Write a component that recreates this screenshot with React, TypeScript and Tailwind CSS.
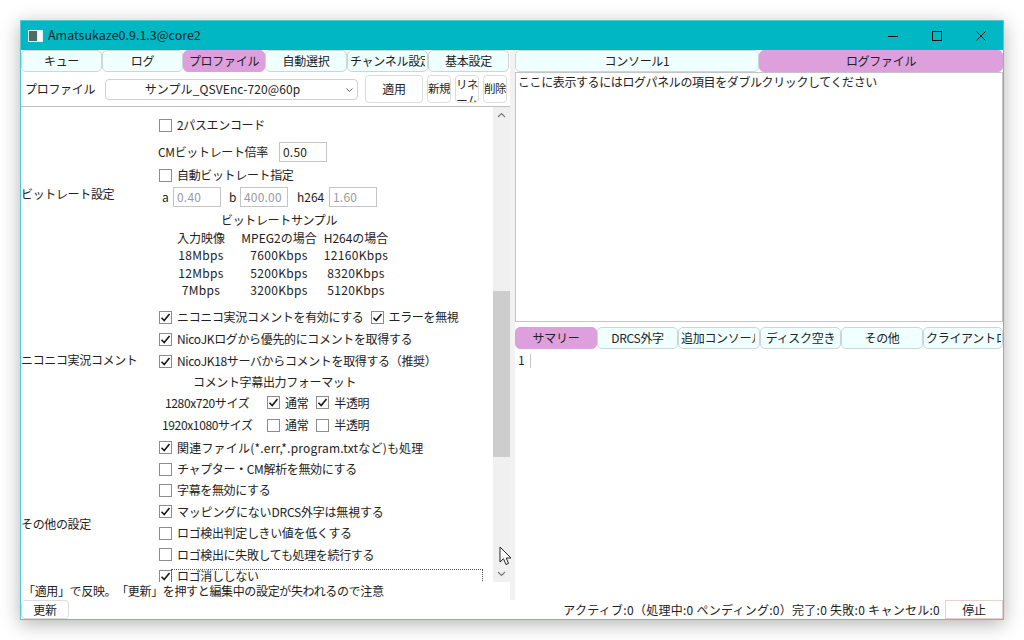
import type { ReactNode } from "react";

const font = "font-['Noto_Sans_CJK_JP','Noto_Sans',sans-serif]";

function Tab({ label, active, clip, w }: { label: string; active?: boolean; clip?: string; w: string }) {
  return (
    <div
      className={`flex h-[22px] shrink-0 items-center overflow-hidden whitespace-nowrap rounded-[5px] border text-[12px] tracking-[-0.3px] ${w} ${
        clip ? `justify-start pl-[2px] ${clip}` : "justify-center"
      } ${active ? "border-[#dda0dd] bg-[#dda0dd]" : "border-[#ccd6d6] bg-[#f0ffff]"}`}
    >
      {clip ? <span className="block min-w-0 overflow-hidden">{label}</span> : label}
    </div>
  );
}

function Check({ on, label, className = "" }: { on?: boolean; label?: string; className?: string }) {
  return (
    <span className={`flex items-center whitespace-nowrap ${className}`}>
      <span className="flex h-[13px] w-[13px] shrink-0 items-center justify-center border border-[#8c8c8c] bg-white">
        {on && (
          <svg width="11" height="11" viewBox="0 0 11 11" fill="none">
            <path d="M1.5 5.8 L4.2 8.6 L9.5 2" stroke="#1a1a1a" strokeWidth="1.6" />
          </svg>
        )}
      </span>
      {label && <span className="ml-[5px]">{label}</span>}
    </span>
  );
}

function NumBox({ value, disabled, w }: { value: string; disabled?: boolean; w: string }) {
  return (
    <span
      className={`flex h-[20px] items-center border border-[#c4c4c4] pl-[3px] text-[12px] tracking-[0.2px] ${w} ${
        disabled ? "text-[#9a9a9a]" : "text-[#222]"
      }`}
    >
      {value}
    </span>
  );
}

function Section({ title, h, pb, children }: { title: string; h: string; pb: string; children: ReactNode }) {
  return (
    <div className={`flex shrink-0 ${h}`}>
      <div className={`flex w-[138px] shrink-0 items-center whitespace-nowrap ${pb}`}>{title}</div>
      <div className="flex min-w-0 flex-1 flex-col">{children}</div>
    </div>
  );
}

function Btn({ children, className = "" }: { children: ReactNode; className?: string }) {
  return (
    <div className={`flex items-center justify-center overflow-hidden rounded-[4px] border border-[#dcdcdc] bg-white ${className}`}>
      {children}
    </div>
  );
}

const samples = [
  ["入力映像", "MPEG2の場合", "H264の場合"],
  ["18Mbps", "7600Kbps", "12160Kbps"],
  ["12Mbps", "5200Kbps", "8320Kbps"],
  ["7Mbps", "3200Kbps", "5120Kbps"],
];

const otherOptions = [
  { label: "関連ファイル(*.err,*.program.txtなど)も処理", on: true, tracking: "tracking-[0.2px]" },
  { label: "チャプター・CM解析を無効にする", tracking: "" },
  { label: "字幕を無効にする", tracking: "" },
  { label: "マッピングにないDRCS外字は無視する", on: true, tracking: "tracking-[-0.2px]" },
  { label: "ロゴ検出判定しきい値を低くする", tracking: "" },
  { label: "ロゴ検出に失敗しても処理を続行する", tracking: "" },
];

function ProfileForm() {
  return (
    <div className="flex min-h-0 flex-1 overflow-hidden">
      <div className="flex min-w-0 flex-1 flex-col overflow-hidden pt-[6px]">
        <Section title="ビットレート設定" h="h-[193px]" pb="pb-[32px]">
          <div className="mt-[1px] flex h-[22px] items-center"><Check label="2パスエンコード" /></div>
          <div className="mt-[5px] flex h-[22px] items-center">
            <span className="ml-[-1px] w-[121px] whitespace-nowrap">CMビットレート倍率</span>
            <NumBox value="0.50" w="w-[48px]" />
          </div>
          <div className="mt-[1px] flex h-[22px] items-center"><Check label="自動ビットレート指定" /></div>
          <div className="flex h-[22px] items-center">
            <span className="ml-[3px] w-[11px]">a</span>
            <NumBox value="0.40" disabled w="w-[48px]" />
            <span className="ml-[8px] w-[11px]">b</span>
            <NumBox value="400.00" disabled w="w-[48px]" />
            <span className="ml-[9px] w-[32px] tracking-normal">h264</span>
            <NumBox value="1.60" disabled w="w-[48px]" />
          </div>
          <div className="flex h-[21px] items-center pl-[62px] pt-[3px]">ビットレートサンプル</div>
          {samples.map((row, i) => (
            <div key={row[0]} className={`flex h-[17.5px] items-center ${i === 0 ? "tracking-normal" : "tracking-[0.35px]"}`}>
              <span className="ml-[15px] w-[54px] text-center">{row[0]}</span>
              <span className="ml-[12px] w-[78px] text-center">{row[1]}</span>
              <span className="ml-[3px] w-[70px] text-center">{row[2]}</span>
            </div>
          ))}
        </Section>
        <Section title="ニコニコ実況コメント" h="h-[131px]" pb="pb-[23px]">
          <div className="flex h-[22px] shrink-0 items-center">
            <Check on label="ニコニコ実況コメントを有効にする" />
            <Check on label="エラーを無視" className="ml-[7px]" />
          </div>
          <div className="flex h-[22px] shrink-0 items-center"><Check on label="NicoJKログから優先的にコメントを取得する" /></div>
          <div className="flex h-[22px] shrink-0 items-center"><Check on label="NicoJK18サーバからコメントを取得する（推奨）" /></div>
          <div className="flex h-[20px] shrink-0 items-center pl-[34px]">コメント字幕出力フォーマット</div>
          <div className="flex h-[21px] shrink-0 items-center">
            <span className="ml-[6px] w-[102px] whitespace-nowrap">1280x720サイズ</span>
            <Check on label="通常" />
            <Check on label="半透明" className="ml-[8px]" />
          </div>
          <div className="mt-[1px] flex h-[22px] shrink-0 items-center">
            <span className="ml-[3px] w-[105px] whitespace-nowrap">1920x1080サイズ</span>
            <Check label="通常" />
            <Check label="半透明" className="ml-[8px]" />
          </div>
        </Section>
        <Section title="その他の設定" h="h-[174px]" pb="pb-0">
          {otherOptions.map((item) => (
            <div key={item.label} className={`flex h-[21.4px] shrink-0 items-center ${item.tracking}`}>
              <Check on={item.on} label={item.label} />
            </div>
          ))}
          <div className="flex h-[22px] shrink-0 items-center">
            <Check on />
            <span className="ml-[-1px] mt-[9px] flex h-[24px] w-[312px] items-start border border-dotted border-[#555] pl-[5px] pt-[0px]">
              ロゴ消ししない
            </span>
          </div>
        </Section>
      </div>
      {/* scrollbar */}
      <div className="flex w-[17px] shrink-0 flex-col items-center bg-[#f0f0f0]">
        <svg className="mt-[5px] shrink-0" width="9" height="6" viewBox="0 0 9 6" fill="none">
          <path d="M1 5 L4.5 1.5 L8 5" stroke="#777" strokeWidth="1.2" />
        </svg>
        <div className="h-[173px] shrink-0" />
        <div className="h-[166px] w-full shrink-0 bg-[#cdcdcd]" />
        <div className="flex-1" />
        <svg className="mb-[5px] shrink-0" width="9" height="6" viewBox="0 0 9 6" fill="none">
          <path d="M1 1 L4.5 4.5 L8 1" stroke="#777" strokeWidth="1.2" />
        </svg>
      </div>
    </div>
  );
}

export default function App() {
  return (
    <div className={`h-[640px] w-[1024px] overflow-hidden bg-white p-[20px] text-[12px] leading-none tracking-[-0.35px] text-[#222] ${font}`}>
      <div className="relative flex h-[600px] w-[984px] flex-col border border-[#4fc8d0] bg-white shadow-[0_4px_18px_rgba(0,0,0,0.3)]">
        {/* title bar */}
        <div className="flex h-[29px] shrink-0 items-center bg-[#00b7c3]">
          <svg className="ml-[7px]" width="15" height="12" viewBox="0 0 15 12">
            <rect x="0" y="0" width="15" height="12" fill="#e8eef0" />
            <rect x="1" y="1" width="8" height="10" fill="#4c6a66" />
            <rect x="10" y="1" width="4" height="10" fill="#f8f8f8" />
          </svg>
          <span className="ml-[5px] text-[12.5px] tracking-normal text-[#10262a]">Amatsukaze0.9.1.3@core2</span>
          <div className="flex-1" />
          <svg width="98" height="14" viewBox="0 0 98 14" fill="none" stroke="#111" strokeWidth="1">
            <path d="M0 7.5 H10" />
            <rect x="44.5" y="2.5" width="9" height="9" />
            <path d="M88.5 2.5 L97.5 11.5 M97.5 2.5 L88.5 11.5" />
          </svg>
          <div className="w-[17px]" />
        </div>

        <div className="flex min-h-0 flex-1">
          {/* left pane */}
          <div className="flex w-[489px] shrink-0 flex-col">
            <div className="flex h-[22px] shrink-0">
              <Tab label="キュー" w="w-[81px]" />
              <Tab label="ログ" w="w-[81px]" />
              <Tab label="プロファイル" active w="w-[82px]" />
              <Tab label="自動選択" w="w-[82px]" />
              <Tab label="チャンネル設定" clip="pr-[2px]" w="w-[81px]" />
              <Tab label="基本設定" w="w-[81px]" />
            </div>
            <div className="flex h-[35px] shrink-0 items-center border-b border-[#c0c0c0] tracking-[-0.3px]">
              <span className="ml-[4px] w-[80px] whitespace-nowrap">プロファイル</span>
              <div className="relative flex h-[21px] w-[253px] items-center justify-center rounded-[4px] border border-[#d0d0d0] pr-[18px] tracking-[0.1px]">
                サンプル_QSVEnc-720@60p
                <svg className="absolute right-[3px] top-[7px]" width="9" height="6" viewBox="0 0 9 6" fill="none">
                  <path d="M1.5 1.5 L4.5 4.5 L7.5 1.5" stroke="#666" strokeWidth="1" />
                </svg>
              </div>
              <Btn className="ml-[7px] h-[28px] w-[58px]">適用</Btn>
              <Btn className="ml-[4px] h-[28px] w-[24px] text-[11.5px] tracking-[-0.5px]">新規</Btn>
              <Btn className="ml-[4px] h-[28px] w-[24px] items-start text-center text-[11.5px] leading-[16px] tracking-[-0.5px]">
                リネーム
              </Btn>
              <Btn className="ml-[4px] h-[28px] w-[24px] text-[11.5px] tracking-[-0.5px]">削除</Btn>
            </div>
            <ProfileForm />
            <div className="flex h-[18px] shrink-0 items-center whitespace-nowrap pl-[2px] tracking-[-0.35px] [text-spacing-trim:space-all]">
              「適用」で反映。「更新」を押すと編集中の設定が失われるので注意
            </div>
          </div>

          {/* splitter */}
          <div className="w-[5px] shrink-0 bg-[#f2f2f2]" />

          {/* right pane */}
          <div className="flex min-w-0 flex-1 flex-col">
            <div className="flex h-[22px] shrink-0">
              <Tab label="コンソール1" w="w-[244px]" />
              <Tab label="ログファイル" active w="w-[244px]" />
            </div>
            <div className="h-[250px] shrink-0 whitespace-nowrap border border-[#c4c4c4] pl-[2px] pt-[3px] tracking-[-0.4px]">
              ここに表示するにはログパネルの項目をダブルクリックしてください
            </div>
            <div className="h-[5px] shrink-0" />
            <div className="flex h-[22px] shrink-0">
              <Tab label="サマリー" active w="w-[82px]" />
              <Tab label="DRCS外字" w="w-[81px]" />
              <Tab label="追加コンソール" clip="pr-[4px]" w="w-[82px]" />
              <Tab label="ディスク空き" w="w-[81px]" />
              <Tab label="その他" w="w-[82px]" />
              <Tab label="クライアントログ" clip="pr-[1px]" w="w-[80px]" />
            </div>
            <div className="flex flex-1 items-start pl-[3px] pt-[5px]">
              <span className="w-[12px]">1</span>
              <span className="h-[14px] w-px bg-[#c4c4c4]" />
            </div>
          </div>
        </div>

        {/* status bar */}
        <div className="flex h-[19px] shrink-0 items-center">
          <Btn className="h-[19px] w-[48px]">更新</Btn>
          <div className="flex-1" />
          <span className="mr-[5px] whitespace-nowrap tracking-[0.27px] [text-spacing-trim:space-all]">
            アクティブ:0（処理中:0 ペンディング:0）完了:0 失敗:0 キャンセル:0
          </span>
          <div className="flex h-[19px] w-[58px] items-center justify-center border border-[#e8d0d0]">停止</div>
        </div>

        {/* mouse pointer */}
        <svg className="absolute left-[478px] top-[525px]" width="14" height="21" viewBox="0 0 14 21">
          <path d="M1 1 V16 L4.5 12.8 L7 18.5 L9.5 17.4 L7.2 12 H12 Z" fill="#fff" stroke="#222" strokeWidth="1" />
        </svg>
      </div>
    </div>
  );
}
